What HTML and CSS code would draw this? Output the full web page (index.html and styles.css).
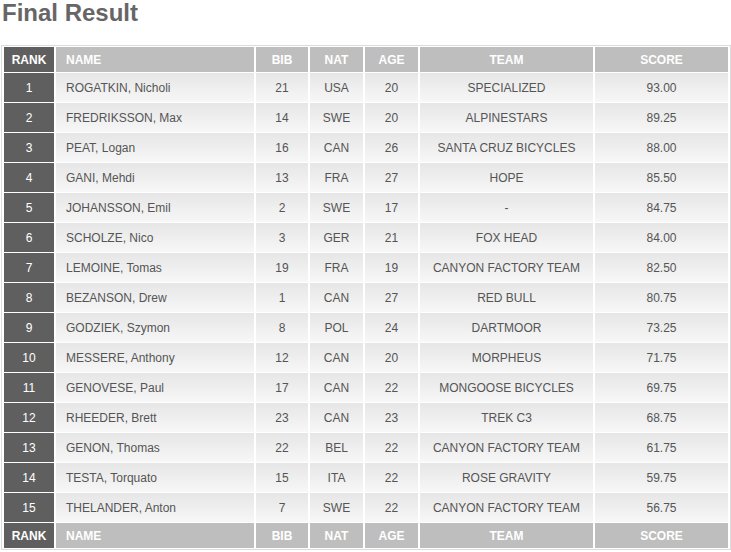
FILE: index.html
```html
<!DOCTYPE html>
<html>
<head>
<meta charset="utf-8">
<link rel="stylesheet" href="styles.css">
</head>
<body>
<h2 class="title">Final Result</h2>
<table class="results">
  <thead>
    <tr><th class="rank">RANK</th><th class="name">NAME</th><th class="bib">BIB</th><th class="nat">NAT</th><th class="age">AGE</th><th class="team">TEAM</th><th class="score">SCORE</th></tr>
  </thead>
  <tbody>
    <tr><td class="rank">1</td><td class="name">ROGATKIN, Nicholi</td><td>21</td><td>USA</td><td>20</td><td>SPECIALIZED</td><td>93.00</td></tr>
    <tr><td class="rank">2</td><td class="name">FREDRIKSSON, Max</td><td>14</td><td>SWE</td><td>20</td><td>ALPINESTARS</td><td>89.25</td></tr>
    <tr><td class="rank">3</td><td class="name">PEAT, Logan</td><td>16</td><td>CAN</td><td>26</td><td>SANTA CRUZ BICYCLES</td><td>88.00</td></tr>
    <tr><td class="rank">4</td><td class="name">GANI, Mehdi</td><td>13</td><td>FRA</td><td>27</td><td>HOPE</td><td>85.50</td></tr>
    <tr><td class="rank">5</td><td class="name">JOHANSSON, Emil</td><td>2</td><td>SWE</td><td>17</td><td>-</td><td>84.75</td></tr>
    <tr><td class="rank">6</td><td class="name">SCHOLZE, Nico</td><td>3</td><td>GER</td><td>21</td><td>FOX HEAD</td><td>84.00</td></tr>
    <tr><td class="rank">7</td><td class="name">LEMOINE, Tomas</td><td>19</td><td>FRA</td><td>19</td><td>CANYON FACTORY TEAM</td><td>82.50</td></tr>
    <tr><td class="rank">8</td><td class="name">BEZANSON, Drew</td><td>1</td><td>CAN</td><td>27</td><td>RED BULL</td><td>80.75</td></tr>
    <tr><td class="rank">9</td><td class="name">GODZIEK, Szymon</td><td>8</td><td>POL</td><td>24</td><td>DARTMOOR</td><td>73.25</td></tr>
    <tr><td class="rank">10</td><td class="name">MESSERE, Anthony</td><td>12</td><td>CAN</td><td>20</td><td>MORPHEUS</td><td>71.75</td></tr>
    <tr><td class="rank">11</td><td class="name">GENOVESE, Paul</td><td>17</td><td>CAN</td><td>22</td><td>MONGOOSE BICYCLES</td><td>69.75</td></tr>
    <tr><td class="rank">12</td><td class="name">RHEEDER, Brett</td><td>23</td><td>CAN</td><td>23</td><td>TREK C3</td><td>68.75</td></tr>
    <tr><td class="rank">13</td><td class="name">GENON, Thomas</td><td>22</td><td>BEL</td><td>22</td><td>CANYON FACTORY TEAM</td><td>61.75</td></tr>
    <tr><td class="rank">14</td><td class="name">TESTA, Torquato</td><td>15</td><td>ITA</td><td>22</td><td>ROSE GRAVITY</td><td>59.75</td></tr>
    <tr><td class="rank">15</td><td class="name">THELANDER, Anton</td><td>7</td><td>SWE</td><td>22</td><td>CANYON FACTORY TEAM</td><td>56.75</td></tr>
  </tbody>
  <tfoot>
    <tr><th class="rank">RANK</th><th class="name">NAME</th><th>BIB</th><th>NAT</th><th>AGE</th><th>TEAM</th><th>SCORE</th></tr>
  </tfoot>
</table>
</body>
</html>
```
FILE: styles.css
```css
html, body {
  margin: 0;
  padding: 0;
  background: #ffffff;
}
body {
  font-family: "Liberation Sans", Arial, sans-serif;
}
.title {
  margin: 0;
  padding: 0 0 0 2px;
  font-size: 24px;
  line-height: 26px;
  font-weight: bold;
  color: #666666;
  height: 45px;
}
.results {
  margin-left: 1px;
  width: 730px;
  border: 1px solid #dcdcdc;
  border-collapse: separate;
  border-spacing: 2px 1px;
  table-layout: fixed;
  font-size: 12px;
}
.results th,
.results td {
  padding: 0;
  text-align: center;
  white-space: nowrap;
}
.results th {
  height: 25px;
  background: #bebebe;
  color: #ffffff;
  font-weight: bold;
}
.results td {
  height: 29px;
  background: linear-gradient(#e6e6e6, #f7f7f7);
  color: #555555;
}
.results th.rank,
.results td.rank {
  width: 50px;
  background: #5f5f5f;
  color: #ffffff;
}
.results th.rank { font-weight: bold; }
.results th.name,
.results td.name {
  width: 188px;
  text-align: left;
  padding-left: 10px;
}
.results .bib { width: 52px; }
.results .nat { width: 53px; }
.results .age { width: 53px; }
.results .team { width: 173px; }
.results .score { width: 133px; }
```
